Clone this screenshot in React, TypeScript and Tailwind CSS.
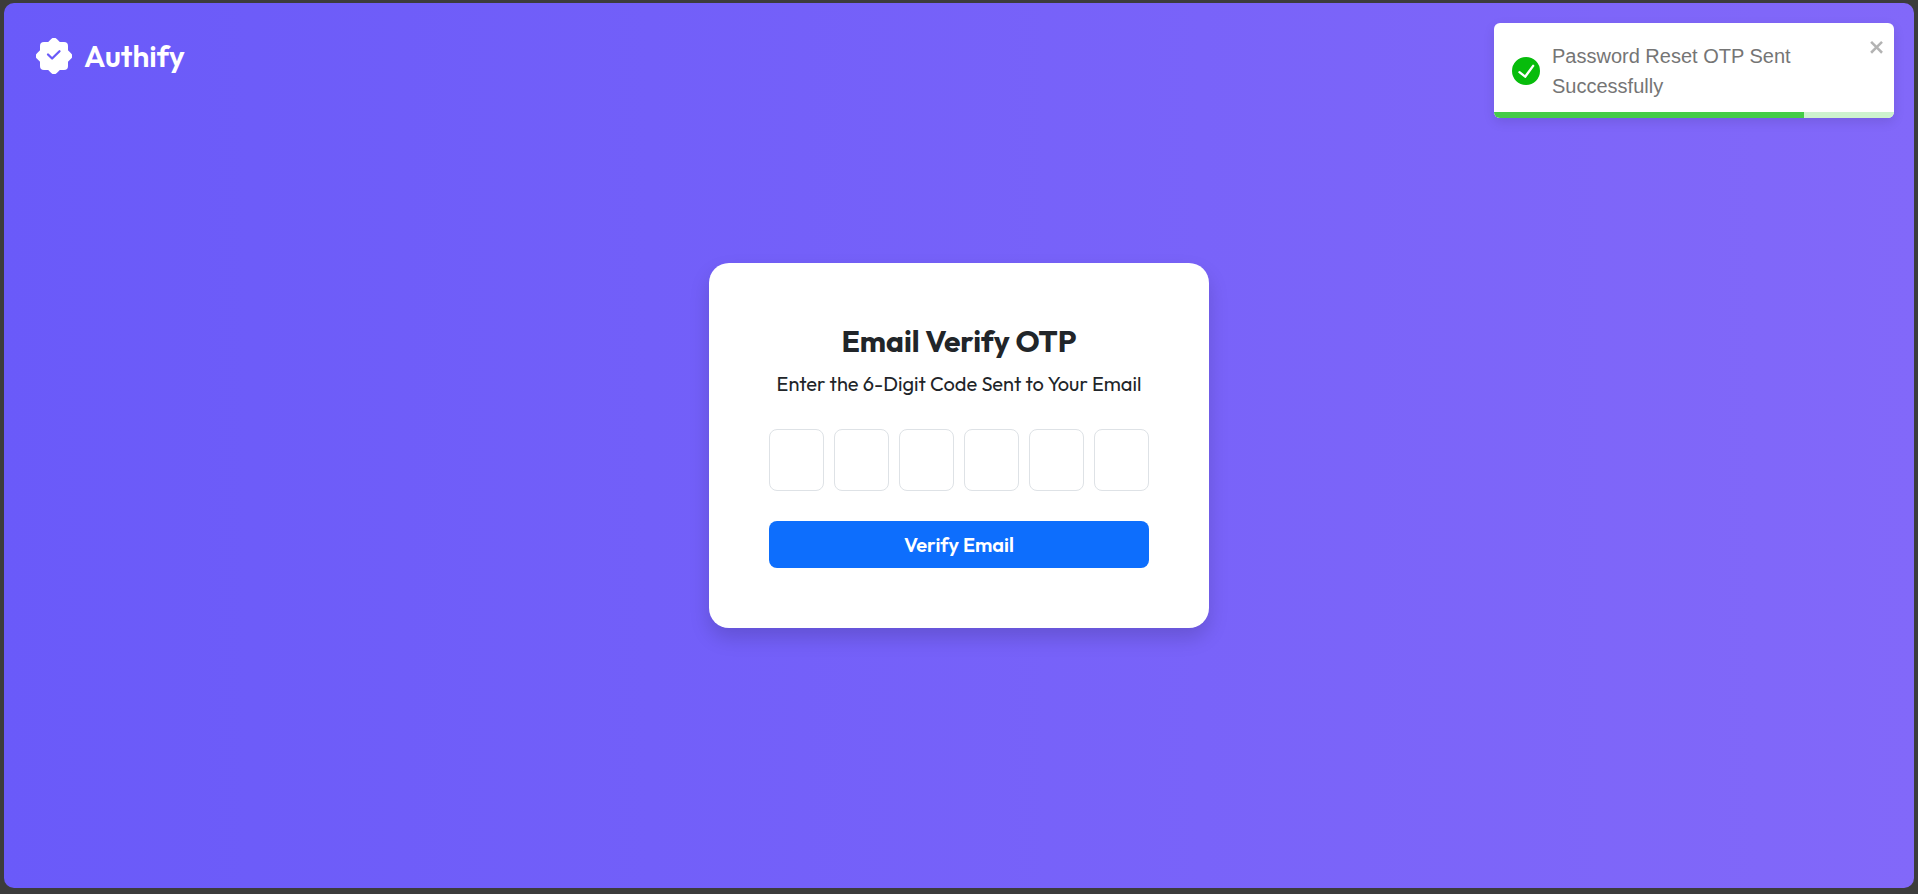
import { useState } from "react";

function BadgeLogo() {
  return (
    <svg viewBox="0 0 36 36" className="size-9 shrink-0" aria-hidden="true">
      <rect x="4" y="4" width="28" height="28" rx="4" fill="#fff" />
      <rect x="4" y="4" width="28" height="28" rx="4" fill="#fff" transform="rotate(45 18 18)" />
      <path
        d="m12 16.500 4.100 4L23.500 13.200"
        fill="none"
        stroke="#6a5af9"
        strokeWidth="2.300"
        strokeLinecap="round"
        strokeLinejoin="round"
      />
    </svg>
  );
}

function Toast({ message, onClose }: { message: string; onClose: () => void }) {
  return (
    <div
      role="status"
      className="absolute top-5 right-5 w-[400px] overflow-hidden rounded-md bg-white shadow-[0_4px_12px_rgba(0,0,0,0.1)]"
    >
      <div className="flex items-center gap-3 pt-[18px] pr-12 pb-[11px] pl-[18px] font-['Liberation_Sans',Arial,sans-serif] text-xl leading-[30px] text-[#757575]">
        <svg viewBox="0 0 24 24" className="size-7 shrink-0" aria-hidden="true">
          <path
            fill="#07bc0c"
            d="M12 0a12 12 0 1 0 12 12A12.014 12.014 0 0 0 12 0zm6.927 8.200-6.845 9.289a1.011 1.011 0 0 1-1.430.188l-4.888-3.908a1 1 0 1 1 1.250-1.562l4.076 3.261 6.227-8.451a1 1 0 1 1 1.610 1.183z"
          />
        </svg>
        <p>{message}</p>
      </div>
      <button
        type="button"
        aria-label="Close notification"
        onClick={onClose}
        className="absolute top-3.5 right-2 cursor-pointer text-[#b3b3b3]"
      >
        <svg viewBox="0 0 14 16" className="h-5 w-[17px]" fill="currentColor" aria-hidden="true">
          <path
            fillRule="evenodd"
            d="M7.710 8.230l3.750 3.750-1.480 1.480-3.750-3.750-3.750 3.750L1 11.980l3.750-3.750L1 4.480 2.480 3l3.750 3.750L9.980 3l1.480 1.480-3.750 3.750z"
          />
        </svg>
      </button>
      <div className="h-1.5 bg-[#cdf2ce]">
        <div className="h-full bg-[#44cc48]" style={{ width: "77.4%" }} />
      </div>
    </div>
  );
}

export default function App() {
  const [digits, setDigits] = useState<string[]>(Array(6).fill(""));
  const [toastOpen, setToastOpen] = useState(true);

  const updateDigit = (index: number, value: string) =>
    setDigits(digits.map((d, i) => (i === index ? value.replace(/\D/g, "") : d)));

  return (
    <div className="flex min-h-screen flex-col bg-[#3c3c3c] px-1 pt-[3px] pb-1.5 font-[Outfit,Lato,sans-serif] text-[#212529]">
      <div className="relative flex grow flex-col rounded-[10px] bg-linear-to-r from-[#6a5af9] to-[#8268f9]">
        <header className="flex px-8 pt-[35px]">
          <a href="#" className="flex items-center gap-3 text-[30px] leading-9 font-semibold text-white">
            <BadgeLogo />
            <span>Authify</span>
          </a>
        </header>

        <main className="flex grow items-center justify-center px-4 pb-[71px]">
          <form
            onSubmit={(e) => e.preventDefault()}
            className="w-[500px] rounded-[20px] bg-white p-[60px] text-center shadow-[0_10px_20px_rgba(0,0,0,0.15)]"
          >
            <h1 className="text-[30px] leading-9 font-bold">Email Verify OTP</h1>
            <p className="mt-2.5 text-xl leading-[30px]">Enter the 6-Digit Code Sent to Your Email</p>
            <div className="mt-[30px] flex gap-2.5">
              {digits.map((digit, i) => (
                <input
                  key={i}
                  type="text"
                  inputMode="numeric"
                  maxLength={1}
                  aria-label={`Digit ${i + 1}`}
                  value={digit}
                  onChange={(e) => updateDigit(i, e.target.value)}
                  className="h-[62px] min-w-0 flex-1 rounded-lg border border-[#dee2e6] text-center text-2xl"
                />
              ))}
            </div>
            <button
              type="submit"
              className="mt-[30px] w-full cursor-pointer rounded-lg bg-[#0d6efd] py-2 text-xl leading-[31px] font-semibold text-white"
            >
              Verify Email
            </button>
          </form>
        </main>

        {toastOpen && (
          <Toast message="Password Reset OTP Sent Successfully" onClose={() => setToastOpen(false)} />
        )}
      </div>
    </div>
  );
}
